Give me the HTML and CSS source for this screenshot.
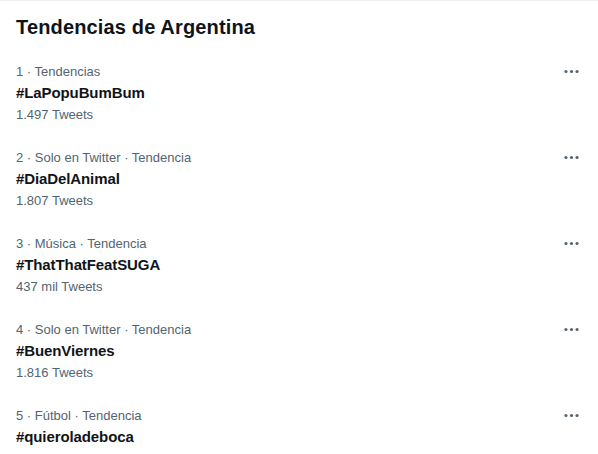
FILE: index.html
```html
<!DOCTYPE html>
<html lang="es">
<head>
<meta charset="utf-8">
<link rel="stylesheet" href="styles.css">
</head>
<body>
<div class="panel">
  <h2 class="heading">Tendencias de Argentina</h2>
  <ul class="trends">
    <li class="trend">
      <div class="info">
        <div class="meta">1 · Tendencias</div>
        <div class="name">#LaPopuBumBum</div>
        <div class="count">1.497 Tweets</div>
      </div>
      <button class="more" aria-label="Más"><svg viewBox="0 0 24 24" width="19" height="19"><circle cx="5" cy="12" r="2"/><circle cx="12" cy="12" r="2"/><circle cx="19" cy="12" r="2"/></svg></button>
    </li>
    <li class="trend">
      <div class="info">
        <div class="meta">2 · Solo en Twitter · Tendencia</div>
        <div class="name">#DiaDelAnimal</div>
        <div class="count">1.807 Tweets</div>
      </div>
      <button class="more" aria-label="Más"><svg viewBox="0 0 24 24" width="19" height="19"><circle cx="5" cy="12" r="2"/><circle cx="12" cy="12" r="2"/><circle cx="19" cy="12" r="2"/></svg></button>
    </li>
    <li class="trend">
      <div class="info">
        <div class="meta">3 · Música · Tendencia</div>
        <div class="name">#ThatThatFeatSUGA</div>
        <div class="count">437 mil Tweets</div>
      </div>
      <button class="more" aria-label="Más"><svg viewBox="0 0 24 24" width="19" height="19"><circle cx="5" cy="12" r="2"/><circle cx="12" cy="12" r="2"/><circle cx="19" cy="12" r="2"/></svg></button>
    </li>
    <li class="trend">
      <div class="info">
        <div class="meta">4 · Solo en Twitter · Tendencia</div>
        <div class="name">#BuenViernes</div>
        <div class="count">1.816 Tweets</div>
      </div>
      <button class="more" aria-label="Más"><svg viewBox="0 0 24 24" width="19" height="19"><circle cx="5" cy="12" r="2"/><circle cx="12" cy="12" r="2"/><circle cx="19" cy="12" r="2"/></svg></button>
    </li>
    <li class="trend">
      <div class="info">
        <div class="meta">5 · Fútbol · Tendencia</div>
        <div class="name">#quieroladeboca</div>
      </div>
      <button class="more" aria-label="Más"><svg viewBox="0 0 24 24" width="19" height="19"><circle cx="5" cy="12" r="2"/><circle cx="12" cy="12" r="2"/><circle cx="19" cy="12" r="2"/></svg></button>
    </li>
  </ul>
</div>
</body>
</html>
```

FILE: styles.css
```css
html, body {
  margin: 0;
  padding: 0;
  background: #ffffff;
}
body {
  font-family: "Liberation Sans", Arial, sans-serif;
  color: #0f1419;
  overflow: hidden;
}
.panel {
  border-top: 1px solid #eff3f4;
  width: 598px;
}
.heading {
  margin: 0;
  padding: 14px 16px 12px;
  font-size: 20px;
  line-height: 24px;
  font-weight: 700;
  letter-spacing: 0.15px;
}
.trends {
  list-style: none;
  margin: 0;
  padding: 0;
}
.trend {
  display: flex;
  justify-content: space-between;
  align-items: flex-start;
  padding: 13px 16px 14px;
}
.info {
  display: flex;
  flex-direction: column;
}
.meta {
  font-size: 13px;
  line-height: 16px;
  color: #536471;
}
.name {
  margin-top: 3px;
  font-size: 15px;
  line-height: 20px;
  font-weight: 700;
  letter-spacing: -0.1px;
}
.count {
  margin-top: 4px;
  font-size: 13px;
  line-height: 16px;
  color: #536471;
}
.more {
  border: 0;
  background: none;
  padding: 0;
  margin: -2px 1px 0 0;
  width: 19px;
  height: 19px;
  color: #536471;
  display: flex;
}
.more svg {
  fill: currentColor;
}
```
